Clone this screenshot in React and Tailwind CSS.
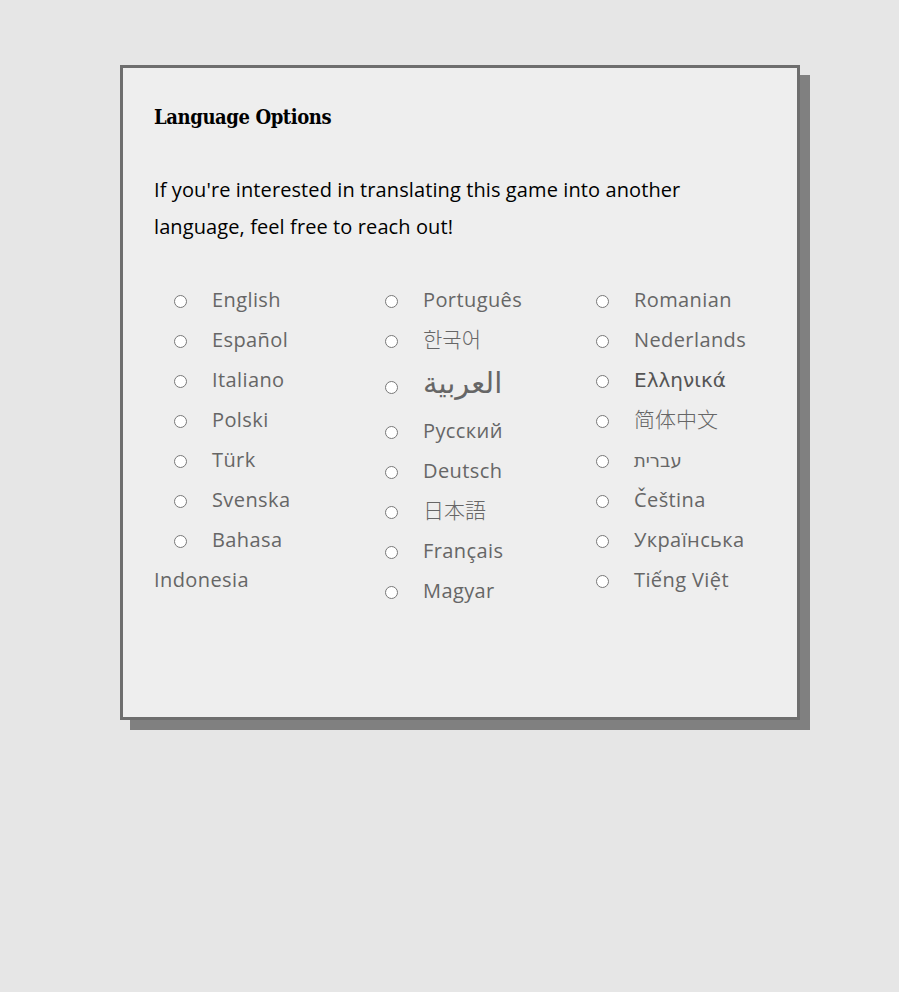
import React from "react";

const columns = [
  [
    { label: "English" },
    { label: "Español" },
    { label: "Italiano" },
    { label: "Polski" },
    { label: "Türk" },
    { label: "Svenska" },
    { label: "Bahasa Indonesia" },
  ],
  [
    { label: "Português" },
    { label: "한국어", font: "font-['Noto_Sans_CJK_KR',sans-serif] text-[21px] tracking-normal font-light leading-none" },
    { label: "العربية", arabic: true },
    { label: "Русский" },
    { label: "Deutsch" },
    { label: "日本語", font: "font-['Noto_Sans_CJK_JP',sans-serif] text-[21px] tracking-normal font-light leading-none" },
    { label: "Français" },
    { label: "Magyar" },
  ],
  [
    { label: "Romanian" },
    { label: "Nederlands" },
    { label: "Ελληνικά", font: "font-['DejaVu_Sans',sans-serif] text-[20px] tracking-normal text-[#555555] leading-none" },
    { label: "简体中文", font: "font-['Noto_Sans_CJK_SC',sans-serif] text-[21px] tracking-normal font-light leading-none" },
    { label: "עברית", font: "font-['DejaVu_Sans',sans-serif] text-[18px] tracking-normal leading-none" },
    { label: "Čeština" },
    { label: "Українська" },
    { label: "Tiếng Việt" },
  ],
];

function LanguageItem({ item }) {
  const rowClass = item.arabic ? "leading-[51px]" : "leading-[40px]";
  return (
    <div className={rowClass}>
      <input
        type="radio"
        name="language"
        className="ml-[20px] mr-[25px] align-middle"
      />
      <label
        className={
          item.arabic
            ? "font-['DejaVu_Sans',sans-serif] text-[29px] tracking-normal leading-none"
            : item.font || ""
        }
      >
        {item.label}
      </label>
    </div>
  );
}

export default function App() {
  return (
    <div className="min-h-screen bg-[#e6e6e6] pl-[120px] pt-[65px]">
      <div className="h-[655px] w-[680px] border-[3px] border-[#6e6e6e] bg-[#eeeeee] px-[31px] pt-[35px] shadow-[10px_10px_0_#808080]">
        <h2 className="font-['DejaVu_Serif',serif] text-[20px] font-bold leading-[28px] tracking-[-0.4px] text-black font-stretch-condensed">
          Language Options
        </h2>

        <p className="mt-[40px] font-['Open_Sans',sans-serif] text-[20px] leading-[37px] tracking-[0.1px] text-black">
          If you're interested in translating this game into another
          language, feel free to reach out!
        </p>

        <div className="mt-[35px] flex font-['Open_Sans',sans-serif] text-[20px] tracking-[0.4px] text-[#666666]">
          {columns.map((col, i) => (
            <div key={i} className="w-[211px] shrink-0">
              {col.map((item) => (
                <LanguageItem key={item.label} item={item} />
              ))}
            </div>
          ))}
        </div>
      </div>
    </div>
  );
}
